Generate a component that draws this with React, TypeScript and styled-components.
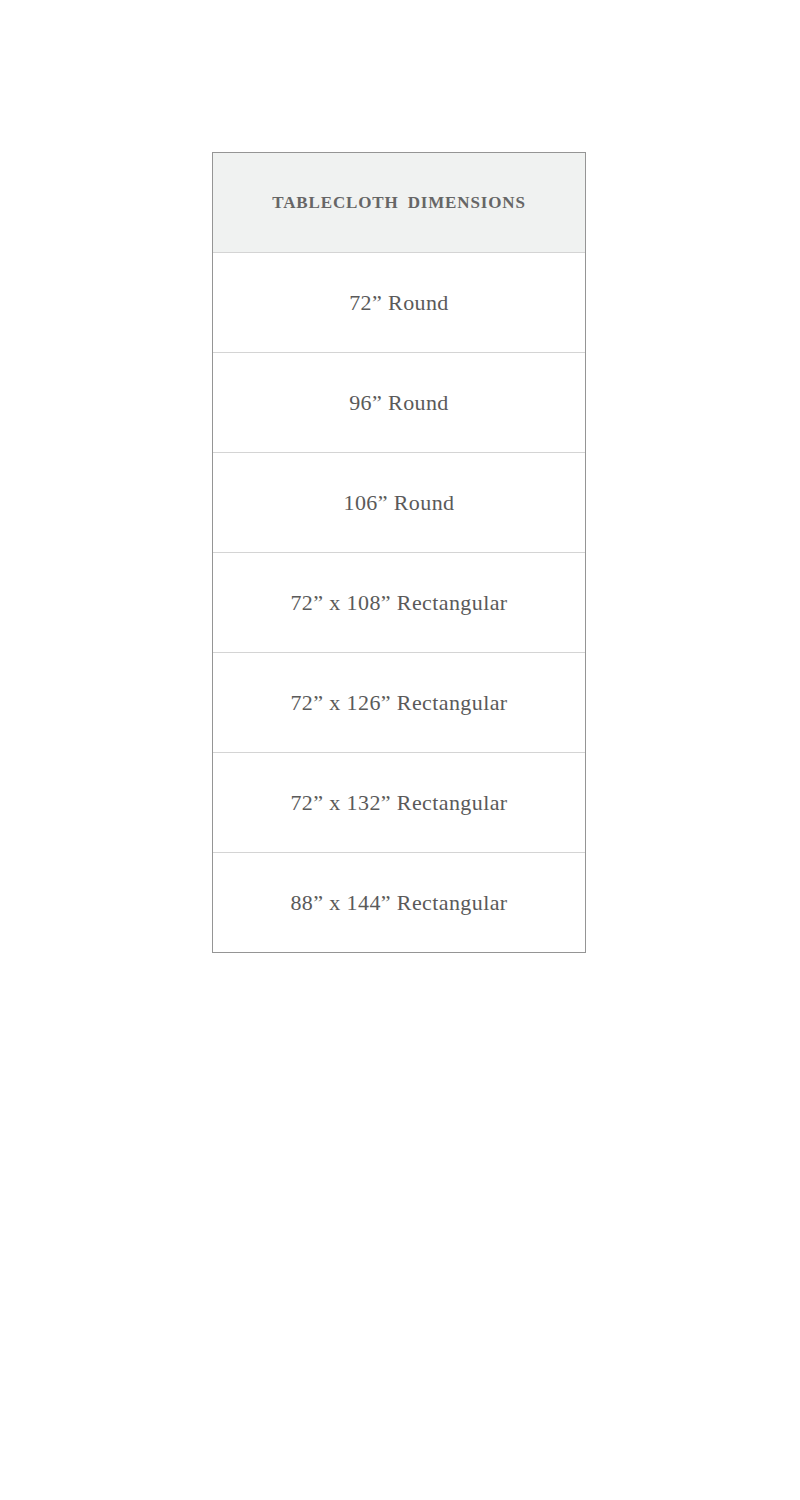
import React from "react"
import styled, { createGlobalStyle } from "styled-components"

const GlobalStyle = createGlobalStyle`
  body {
    margin: 8px;
    background: #ffffff;
    font-family: "Liberation Serif", "DejaVu Serif", serif;
  }
`

const Page = styled.div`
  display: flex;
  justify-content: center;
  padding-top: 144px;
`

const Table = styled.div`
  width: 372px;
  margin-right: 2px;
  border: 1px solid #959595;
  display: flex;
  flex-direction: column;
`

const Row = styled.div<{ $head?: boolean }>`
  height: 99px;
  display: flex;
  align-items: center;
  justify-content: center;
  background: ${(p) => (p.$head ? "#f0f2f1" : "#ffffff")};
  border-bottom: 1px solid #d4d4d4;
  &:last-child {
    border-bottom: none;
  }
`

const HeadText = styled.span`
  font-size: 17px;
  font-weight: bold;
  color: #666666;
  text-transform: uppercase;
  word-spacing: 4px;
  letter-spacing: 0.85px;
`

const CellText = styled.span`
  font-size: 22px;
  letter-spacing: 0.4px;
  color: #5a5a5a;
`

const sizes = [
  "72” Round",
  "96” Round",
  "106” Round",
  "72” x 108” Rectangular",
  "72” x 126” Rectangular",
  "72” x 132” Rectangular",
  "88” x 144” Rectangular",
]

const App: React.FC = () => {
  return (
    <>
      <GlobalStyle />
      <Page>
        <Table>
          <Row $head>
            <HeadText>Tablecloth Dimensions</HeadText>
          </Row>
          {sizes.map((s, i) => (
            <Row key={i}>
              <CellText>{s}</CellText>
            </Row>
          ))}
        </Table>
      </Page>
    </>
  )
}

export default App
